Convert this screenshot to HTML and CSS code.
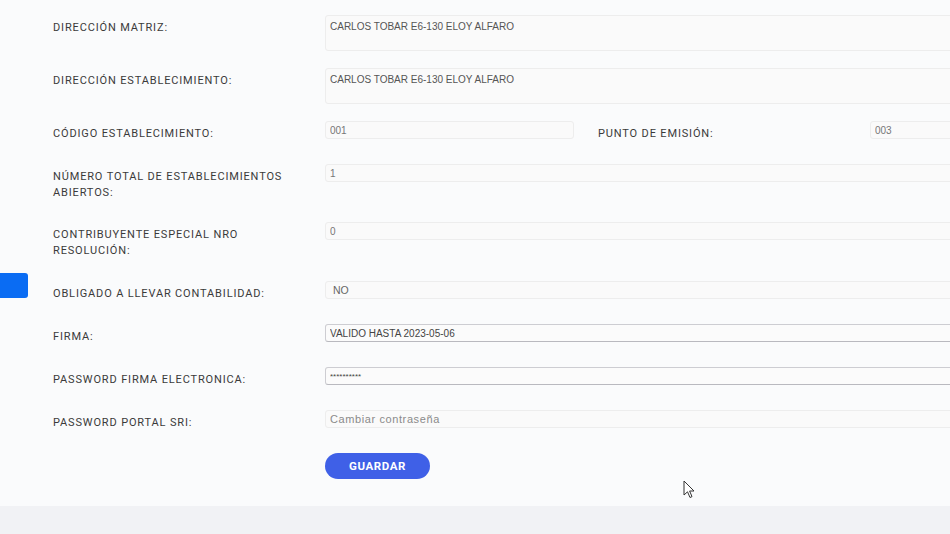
FILE: index.html
```html
<!DOCTYPE html>
<html>
<head>
  <meta charset="utf-8">
  <link rel="stylesheet" href="styles.css">
</head>
<body>
  <div class="side-toggle"></div>

  <div class="panel">
    <form class="form-grid">
      <label class="field-label">Dirección matriz:</label>
      <textarea class="field field-area">CARLOS TOBAR E6-130 ELOY ALFARO</textarea>

      <label class="field-label">Dirección establecimiento:</label>
      <textarea class="field field-area">CARLOS TOBAR E6-130 ELOY ALFARO</textarea>

      <label class="field-label">Código establecimiento:</label>
      <div class="split-row">
        <input class="field field-muted" type="text" value="001">
        <label class="field-label">Punto de emisión:</label>
        <input class="field field-muted" type="text" value="003">
      </div>

      <label class="field-label field-label-tight">Número total de establecimientos abiertos:</label>
      <input class="field field-muted" type="text" value="1">

      <label class="field-label">Contribuyente especial nro resolución:</label>
      <input class="field field-muted" type="text" value="0">

      <label class="field-label">Obligado a llevar contabilidad:</label>
      <div class="field field-select">NO</div>

      <label class="field-label">Firma:</label>
      <input class="field field-strong" type="text" value="VALIDO HASTA 2023-05-06">

      <label class="field-label">Password firma electronica:</label>
      <input class="field field-strong field-pass" type="text" value="**********">

      <label class="field-label">Password portal SRI:</label>
      <input class="field field-plain" type="text" placeholder="Cambiar contraseña">

      <div></div>
      <div class="actions">
        <button type="button" class="btn-save">GUARDAR</button>
      </div>
    </form>
  </div>

  <div class="footer-band"></div>

  <svg class="cursor" viewBox="0 0 12 19" width="12" height="19">
    <path d="M1 1 L1 15 L4.5 11.8 L7 17.5 L9 16.6 L6.6 11 L11 11 Z" fill="#fff" stroke="#333" stroke-width="1" stroke-linejoin="round"/>
  </svg>
</body>
</html>
```

FILE: styles.css
```css
html, body {
  margin: 0;
  height: 100%;
  overflow: hidden;
}
body {
  background: #f1f2f5;
  font-family: Roboto, "Liberation Sans", Arial, sans-serif;
  color: #333;
}
.panel {
  height: 506px;
  background: #fafbfc;
  box-sizing: border-box;
  padding: 15px 0 0 53px;
  overflow: hidden;
}
.footer-band {
  height: 28px;
  background: #f1f2f5;
}
.form-grid {
  width: 947px;
  display: grid;
  grid-template-columns: 272px 1fr;
  row-gap: 17px;
  align-items: start;
}
.field-label {
  font-size: 11px;
  line-height: 16px;
  letter-spacing: 0.85px;
  text-transform: uppercase;
  color: #3a3a3a;
  padding: 5px 30px 5px 0;
}
.field-label-tight {
  padding-bottom: 4px;
}
.field {
  display: block;
  box-sizing: border-box;
  width: 100%;
  margin: 0;
  height: 18px;
  padding: 0 4px;
  font-family: "Liberation Sans", Arial, sans-serif;
  font-size: 10px;
  color: #555;
  background: #fafafa;
  border: 1px solid #ededed;
  border-radius: 3px;
  outline: none;
}
.field-area {
  height: 36px;
  resize: none;
  padding-top: 5px;
  line-height: 12px;
  overflow: hidden;
}
.field-muted {
  color: #777;
}
.split-row {
  display: grid;
  grid-template-columns: 249px 272px 1fr;
  column-gap: 24px;
  align-items: start;
}
.split-row .field-label + .field {
  margin-left: -24px;
  width: calc(100% + 24px);
}
.field-select {
  padding-left: 7px;
  line-height: 17px;
  font-size: 10.5px;
  color: #666;
}
.field-strong {
  border-color: #cdcdd2;
  border-bottom-color: #b9b9bf;
  background: #fbfbfb;
  color: #444;
}
.field-pass {
  font-size: 8px;
  letter-spacing: 0;
}
.field-plain {
  font-size: 11px;
  letter-spacing: 0.6px;
}
.field-plain::placeholder {
  color: #8a8a8a;
}
.actions {
  display: flex;
}
.btn-save {
  width: 105px;
  height: 26px;
  border: none;
  border-radius: 13px;
  background: #3f60e7;
  color: #fff;
  font-family: Roboto, "Liberation Sans", Arial, sans-serif;
  font-weight: bold;
  font-size: 11.5px;
  letter-spacing: 0.6px;
  cursor: pointer;
}
.side-toggle {
  position: absolute;
  left: 0;
  top: 273px;
  width: 28px;
  height: 25px;
  background: #0a6cf3;
  border-radius: 0 3px 3px 0;
}
.cursor {
  position: absolute;
  left: 683px;
  top: 480px;
}
```
